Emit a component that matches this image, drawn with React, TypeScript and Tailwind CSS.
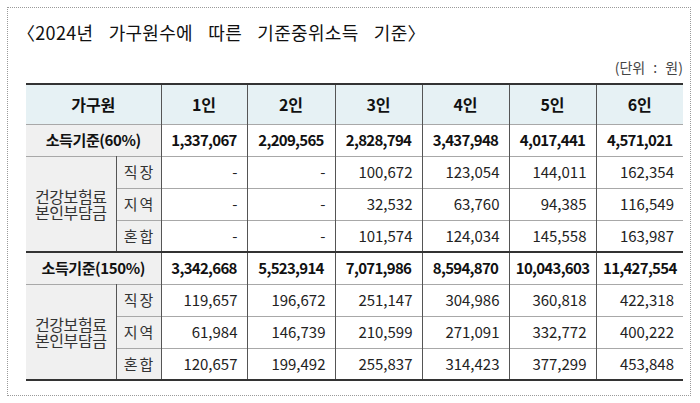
import React from 'react';

const FONT = { fontFamily: '"Noto Sans CJK KR", "Noto Sans", sans-serif' };

const cols = ['1인', '2인', '3인', '4인', '5인', '6인'];

type Block = {
  label: string;
  total: string[];
  rows: { name: string; values: string[] }[];
};

const blocks: Block[] = [
  {
    label: '소득기준(60%)',
    total: ['1,337,067', '2,209,565', '2,828,794', '3,437,948', '4,017,441', '4,571,021'],
    rows: [
      { name: '직장', values: ['-', '-', '100,672', '123,054', '144,011', '162,354'] },
      { name: '지역', values: ['-', '-', '32,532', '63,760', '94,385', '116,549'] },
      { name: '혼합', values: ['-', '-', '101,574', '124,034', '145,558', '163,987'] },
    ],
  },
  {
    label: '소득기준(150%)',
    total: ['3,342,668', '5,523,914', '7,071,986', '8,594,870', '10,043,603', '11,427,554'],
    rows: [
      { name: '직장', values: ['119,657', '196,672', '251,147', '304,986', '360,818', '422,318'] },
      { name: '지역', values: ['61,984', '146,739', '210,599', '271,091', '332,772', '400,222'] },
      { name: '혼합', values: ['120,657', '199,492', '255,837', '314,423', '377,299', '453,848'] },
    ],
  },
];

export default function App() {
  return (
    <div className="w-[700px] h-[403px] bg-white pt-[7px] pl-[7px]" style={FONT}>
      <div className="w-[684px] h-[389px] border border-dotted border-[#9a9a9a] pl-[18px] pr-[6px]">
        {/* title */}
        <h1 className="mt-[11px] -ml-[9px] text-[18px] leading-[26px] text-[#111] tracking-[0.3px] [word-spacing:11px]">
          〈2024년 가구원수에 따른 기준중위소득 기준〉
        </h1>
        <p className="mt-[13px] text-right text-[14px] leading-[19px] text-[#444] pr-[1px] [word-spacing:5px]">
          (단위 : 원)
        </p>

        <table className="mt-[6px] w-[657px] table-fixed border-collapse text-[#111]">
          <colgroup>
            <col className="w-[90px]" />
            <col className="w-[45px]" />
            <col className="w-[86px]" />
            <col className="w-[88px]" />
            <col className="w-[87px]" />
            <col className="w-[87px]" />
            <col className="w-[87px]" />
            <col className="w-[87px]" />
          </colgroup>
          <thead>
            <tr className="h-[40px] bg-[#e6f1f4] border-t-[2px] border-t-[#333] border-b border-b-[#a8a8a8]">
              <th colSpan={2} className="text-[16px] font-bold border-r border-r-[#555]">
                가구원
              </th>
              {cols.map((c, i) => (
                <th
                  key={c}
                  className={`text-[16px] font-bold ${i < cols.length - 1 ? 'border-r border-r-[#555]' : ''}`}
                >
                  {c}
                </th>
              ))}
            </tr>
          </thead>
          <tbody>
            {blocks.map((b, bi) => (
              <React.Fragment key={b.label}>
                <tr
                  className={`h-[32px] border-b border-b-[#a8a8a8] ${
                    bi > 0 ? 'border-t-[2px] border-t-[#333]' : ''
                  }`}
                >
                  <td
                    colSpan={2}
                    className="bg-[#f0f0f0] text-center text-[15px] font-bold tracking-[-0.4px] border-r border-r-[#555]"
                  >
                    {b.label}
                  </td>
                  {b.total.map((v, i) => (
                    <td
                      key={i}
                      className={`text-center text-[15px] font-bold tracking-[-0.7px] ${
                        i < 5 ? 'border-r border-r-[#555]' : ''
                      }`}
                    >
                      {v}
                    </td>
                  ))}
                </tr>
                {b.rows.map((r, ri) => (
                  <tr
                    key={r.name}
                    className={`h-[32px] ${ri < 2 ? 'border-b border-b-[#a8a8a8]' : ''} ${
                      bi === blocks.length - 1 && ri === 2 ? 'border-b-[2px] border-b-[#333]' : ''
                    }`}
                  >
                    {ri === 0 && (
                      <td
                        rowSpan={3}
                        className="bg-[#f0f0f0] text-center text-[16px] leading-[16px] tracking-[-0.4px] text-[#333] border-r border-r-[#555]"
                      >
                        <div>건강보험료</div>
                        <div>본인부담금</div>
                      </td>
                    )}
                    <td className="bg-[#f0f0f0] text-center text-[15px] text-[#333] tracking-[2px] pl-[2px] border-r border-r-[#555]">
                      {r.name}
                    </td>
                    {r.values.map((v, i) => (
                      <td
                        key={i}
                        className={`text-right pr-[9px] text-[15px] text-[#222] ${
                          i < 5 ? 'border-r border-r-[#555]' : ''
                        }`}
                      >
                        {v}
                      </td>
                    ))}
                  </tr>
                ))}
              </React.Fragment>
            ))}
          </tbody>
        </table>
      </div>
    </div>
  );
}
